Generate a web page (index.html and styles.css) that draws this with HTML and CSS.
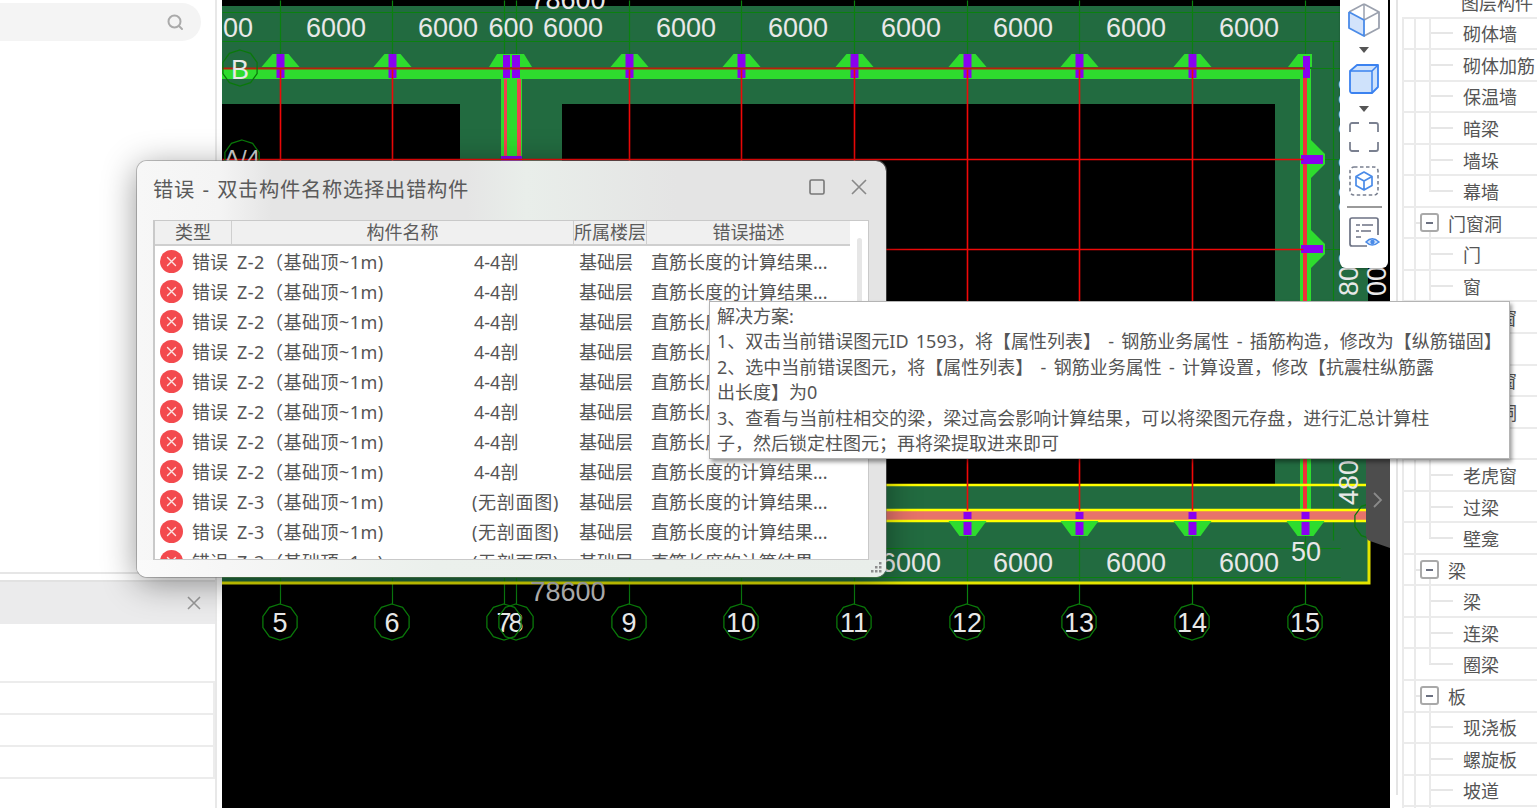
FILE: index.html
```html
<!DOCTYPE html>
<html lang="zh-CN">
<head>
<meta charset="utf-8">
<title>错误 - 双击构件名称选择出错构件</title>
<link rel="stylesheet" href="styles.css">
</head>
<body>
<aside class="left">
  <div class="search">
    <svg class="search-icon" width="18" height="18" viewBox="0 0 18 18"><circle cx="8.5" cy="8.5" r="6" fill="none" stroke="#aaa" stroke-width="2"/><path d="M13 13l3 3" stroke="#aaa" stroke-width="2" stroke-linecap="round"/></svg>
  </div>
  <div class="left-rule"></div>
  <section class="lower">
    <header class="lower-head">
      <svg width="14" height="14" viewBox="0 0 14 14"><path d="M1 1l12 12M13 1L1 13" stroke="#999" stroke-width="1.6"/></svg>
    </header>
    <div class="lower-blank"></div>
    <div class="lower-row"></div>
    <div class="lower-row"></div>
    <div class="lower-row"></div>
  </section>
</aside>

<main class="cad">
  <svg class="drawing" width="1168" height="808" viewBox="222 0 1168 808">
    <defs>
      <g id="mt"><polygon points="-19,67 -8,54 8,54 19,67" fill="#2edc2e"/><rect x="-4" y="54" width="8" height="24" fill="#8a00f0"/></g>
      <g id="mb"><polygon points="-19,521 -8,536 8,536 19,521" fill="#2edc2e"/><rect x="-4" y="512" width="8" height="7" fill="#8a00f0"/><rect x="-4" y="522" width="8" height="13" fill="#8a00f0"/></g>
      <polygon id="oct" points="0,-18 10.6,-14.6 17.1,-5.6 17.1,5.6 10.6,14.6 0,18 -10.6,14.6 -17.1,5.6 -17.1,-5.6 -10.6,-14.6" fill="none" stroke="#0a780a" stroke-width="1.3"/>
      <symbol id="err" viewBox="0 0 23 23"><circle cx="11.5" cy="11.5" r="11.5" fill="#f34a4e"/><path d="M7.5 7.5l8 8M15.5 7.5l-8 8" stroke="#fff" stroke-width="1.4" stroke-linecap="round" opacity=".85"/></symbol>
    </defs>

    <rect x="222" y="0" width="1168" height="808" fill="#000"/>
    <rect x="222" y="6" width="1146" height="578" fill="#226b40"/>
    <rect x="222" y="104" width="238" height="381" fill="#000"/>
    <rect x="562" y="104" width="713" height="381" fill="#000"/>

    <g stroke="#0a800f" stroke-width="1.2" fill="none" transform="translate(.5 .5)">
      <path d="M222 12H1340M222 41H1340M222 68H1340M1311 159H1340M1311 249H1340M222 548H1340M222 577H1340M1333 41V540"/>
      <path d="M280 0V69M392 0V69M504 0V69M516 0V69M629 0V69M741 0V69M854 0V69M967 0V69M1079 0V69M1192 0V69M1305 0V69"/>
      <path d="M280 535V604M392 535V604M504 535V604M516 535V604M629 535V604M741 535V604M854 535V604M967 535V604M1079 535V604M1192 535V604M1305 535V604"/>
    </g>

    <rect x="222" y="69" width="1089" height="10" fill="#2edc2e"/>
    <rect x="1300" y="69" width="11" height="452" fill="#2edc2e"/>
    <rect x="501" y="79" width="21" height="90" fill="#2edc2e"/>
    <rect x="504" y="79" width="3" height="90" fill="#f5404f"/>
    <rect x="517" y="79" width="4" height="90" fill="#f5404f"/>
    <rect x="1303" y="69" width="4" height="452" fill="#f0303a"/>

    <rect x="222" y="510" width="1146" height="11" fill="#e8736a"/>
    <path d="M222 485H1366M222 510H1366M222 521H1366" stroke="#ffff00" stroke-width="2.4" fill="none"/>
    <path d="M222 583H1369V530" stroke="#e4e400" stroke-width="3" fill="none"/>

    <g transform="translate(.5 0)">
      <use href="#mt" x="280"/><use href="#mt" x="392"/><use href="#mt" x="629"/><use href="#mt" x="741"/><use href="#mt" x="854"/><use href="#mt" x="967"/><use href="#mt" x="1079"/><use href="#mt" x="1192"/>
      <use href="#mb" x="967"/><use href="#mb" x="1079"/><use href="#mb" x="1192"/><use href="#mb" x="1305"/><use href="#mb" x="854"/><use href="#mb" x="741"/>
    </g>
    <polygon points="489,67 497,54 524,54 532,67" fill="#2edc2e"/>
    <rect x="503" y="55" width="7" height="23" fill="#8a00f0"/><rect x="512" y="55" width="8" height="23" fill="#8a00f0"/>
    <rect x="501" y="156" width="21" height="5" fill="#8a00f0"/>
    <polygon points="1288,67 1298,54 1312,54 1312,67" fill="#2edc2e"/>
    <rect x="1303" y="56" width="7" height="22" fill="#8a00f0"/>
    <polygon points="1311,140 1325,154 1325,164 1311,178" fill="#2edc2e"/>
    <polygon points="1311,230 1325,244 1325,254 1311,268" fill="#2edc2e"/>
    <rect x="1301" y="155" width="22" height="9" fill="#8a00f0"/>
    <rect x="1301" y="245" width="22" height="8" fill="#8a00f0"/>

    <g stroke="#f00808" stroke-width="1.6" fill="none" transform="translate(.5 .5)">
      <path d="M222 159H1303M222 249H1303"/>
      <path d="M280 69V510M392 69V510M629 69V510M741 69V510M854 69V510M967 69V510M1079 69V510M1192 69V510"/>
    </g>
    <path d="M222 68.6H1305" stroke="#b8200c" stroke-width="2"/>

    <g class="dim">
      <text x="238" y="37">00</text><text x="336" y="37">6000</text><text x="448" y="37">6000</text><text x="511" y="37">600</text><text x="573" y="37">6000</text><text x="686" y="37">6000</text><text x="798" y="37">6000</text><text x="911" y="37">6000</text><text x="1023" y="37">6000</text><text x="1136" y="37">6000</text><text x="1249" y="37">6000</text>
      <text x="568" y="9">78600</text>
      <text x="911" y="572">6000</text><text x="1023" y="572">6000</text><text x="1136" y="572">6000</text><text x="1249" y="572">6000</text>
      <text x="1306" y="561">50</text>
      <text class="dim-soft" x="568" y="601">78600</text>
      <text x="240" y="79">B</text>
      <text class="dim-small" x="242" y="167">A/4</text>
      <text x="280" y="632">5</text><text x="392" y="632">6</text><text x="504" y="632">7</text><text x="516" y="632">8</text><text x="629" y="632">9</text><text x="741" y="632">10</text><text x="854" y="632">11</text><text x="967" y="632">12</text><text x="1079" y="632">13</text><text x="1192" y="632">14</text><text x="1305" y="632">15</text>
      <text class="dim-v" transform="translate(1358 137) rotate(-90)">6000</text>
      <text class="dim-v" transform="translate(1358 215) rotate(-90)">6000</text>
      <text class="dim-v" transform="translate(1358 296) rotate(-90)">800</text>
      <text class="dim-v" transform="translate(1386 296) rotate(-90)">000</text>
      <text class="dim-v" transform="translate(1358 505) rotate(-90)">480</text>
    </g>

    <use href="#oct" x="240" y="68"/><use href="#oct" x="242" y="158"/><use href="#oct" x="1372" y="521"/>
    <use href="#oct" x="280" y="622"/><use href="#oct" x="392" y="622"/><use href="#oct" x="504" y="622"/><use href="#oct" x="516" y="622"/><use href="#oct" x="629" y="622"/><use href="#oct" x="741" y="622"/><use href="#oct" x="854" y="622"/><use href="#oct" x="967" y="622"/><use href="#oct" x="1079" y="622"/><use href="#oct" x="1192" y="622"/><use href="#oct" x="1305" y="622"/>

    <path d="M1390 440H1376Q1366 440 1366 450V535Q1366 540 1370 541L1390 548Z" fill="#4d4d4d"/>
    <path d="M1374 493l7 7-7 7" fill="none" stroke="#8a8a8a" stroke-width="1.8"/>
  </svg>

  <nav class="tools">
    <svg class="t-cube1" width="32" height="34" viewBox="0 0 32 34"><polygon points="1,9 16,17 16,33 1,25" fill="#d3e3fb"/><path d="M16 1l15 8v16l-15 8" fill="none" stroke="#9ba1ae" stroke-width="1.8" stroke-linejoin="round"/><path d="M16 1L1 9M16 17l15-8M16 1v16" fill="none" stroke="#9ba1ae" stroke-width="1.5"/><path d="M1 9v16l15 8V17L1 9" fill="none" stroke="#4a8be8" stroke-width="1.8" stroke-linejoin="round"/></svg>
    <svg class="t-arrow" width="10" height="8" viewBox="0 0 10 8"><polygon points="0,1 10,1 5,7" fill="#555"/></svg>
    <svg class="t-cube2" width="32" height="32" viewBox="0 0 32 32"><path d="M2 8l7-6h21v22l-6 6H4a2 2 0 0 1-2-2z" fill="#cfe2fb" stroke="#3b82f0" stroke-width="1.8" stroke-linejoin="round"/><path d="M2 8h22v22M24 8l6-6" fill="none" stroke="#3b82f0" stroke-width="1.5"/></svg>
    <svg class="t-arrow2" width="10" height="8" viewBox="0 0 10 8"><polygon points="0,1 10,1 5,7" fill="#555"/></svg>
    <svg class="t-frame" width="32" height="32" viewBox="0 0 32 32"><path d="M11 2H4a2 2 0 0 0-2 2v7M21 2h7a2 2 0 0 1 2 2v7M11 30H4a2 2 0 0 1-2-2v-7M21 30h7a2 2 0 0 0 2-2v-7" fill="none" stroke="#7a8090" stroke-width="1.8"/></svg>
    <svg class="t-sel" width="32" height="32" viewBox="0 0 32 32"><rect x="2" y="2" width="28" height="28" rx="4" fill="none" stroke="#7a8090" stroke-width="1.6" stroke-dasharray="3.5 2.5"/><path d="M16 7l8 4.500v9L16 25l-8-4.500v-9zM8 11.500l8 4.500 8-4.500M16 16v9" fill="none" stroke="#4a8be8" stroke-width="1.7" stroke-linejoin="round"/></svg>
    <div class="t-rule"></div>
    <svg class="t-doc" width="32" height="32" viewBox="0 0 32 32"><path d="M19 30H4a2 2 0 0 1-2-2V4a2 2 0 0 1 2-2h24a2 2 0 0 1 2 2v15" fill="none" stroke="#6c7284" stroke-width="1.7"/><path d="M8 9h4M14 9h11M8 15h3M13 15h10M8 21h5" stroke="#6c7284" stroke-width="1.6"/><path d="M18 26q6-6.500 13 0-7 6-13 0z" fill="#cfe2fb" stroke="#4a8be8" stroke-width="1.5"/><circle cx="24.500" cy="26" r="2.200" fill="#4a8be8"/></svg>
  </nav>
</main>

<aside class="right">
  <div class="tree">
    <div class="row">图层构件</div>
    <div class="row leaf">砌体墙</div>
    <div class="row leaf">砌体加筋</div>
    <div class="row leaf">保温墙</div>
    <div class="row leaf">暗梁</div>
    <div class="row leaf">墙垛</div>
    <div class="row leaf last">幕墙</div>
    <div class="row group"><span class="minus"></span>门窗洞</div>
    <div class="row leaf">门</div>
    <div class="row leaf">窗</div>
    <div class="row leaf">门联窗</div>
    <div class="row leaf">墙洞</div>
    <div class="row leaf">带形窗</div>
    <div class="row leaf">带形洞</div>
    <div class="row leaf">飘窗</div>
    <div class="row leaf">老虎窗</div>
    <div class="row leaf">过梁</div>
    <div class="row leaf last">壁龛</div>
    <div class="row group"><span class="minus"></span>梁</div>
    <div class="row leaf">梁</div>
    <div class="row leaf">连梁</div>
    <div class="row leaf last">圈梁</div>
    <div class="row group"><span class="minus"></span>板</div>
    <div class="row leaf">现浇板</div>
    <div class="row leaf">螺旋板</div>
    <div class="row leaf">坡道</div>
    <div class="row leaf"></div>
  </div>
</aside>

<section class="dialog">
  <header class="dlg-title">
    <h1>错误 - 双击构件名称选择出错构件</h1>
    <svg class="dlg-max" width="16" height="16" viewBox="0 0 16 16"><rect x="1" y="1" width="14" height="14" rx="1.500" fill="none" stroke="#777" stroke-width="1.600"/></svg>
    <svg class="dlg-close" width="16" height="16" viewBox="0 0 16 16"><path d="M1 1l14 14M15 1L1 15" stroke="#888" stroke-width="1.600"/></svg>
  </header>
  <div class="table">
    <div class="tmain">
      <div class="thead">
        <div class="th th-type">类型</div>
        <div class="th th-name">构件名称</div>
        <div class="th th-floor">所属楼层</div>
        <div class="th th-desc">错误描述</div>
      </div>
      <div class="tbody">
        <div class="tr"><svg width="23" height="23"><use href="#err"/></svg><span>错误</span><span>Z-2（基础顶~1m)</span><span>4-4剖</span><span>基础层</span><span>直筋长度的计算结果...</span></div>
        <div class="tr"><svg width="23" height="23"><use href="#err"/></svg><span>错误</span><span>Z-2（基础顶~1m)</span><span>4-4剖</span><span>基础层</span><span>直筋长度的计算结果...</span></div>
        <div class="tr"><svg width="23" height="23"><use href="#err"/></svg><span>错误</span><span>Z-2（基础顶~1m)</span><span>4-4剖</span><span>基础层</span><span>直筋长度的计算结果...</span></div>
        <div class="tr"><svg width="23" height="23"><use href="#err"/></svg><span>错误</span><span>Z-2（基础顶~1m)</span><span>4-4剖</span><span>基础层</span><span>直筋长度的计算结果...</span></div>
        <div class="tr"><svg width="23" height="23"><use href="#err"/></svg><span>错误</span><span>Z-2（基础顶~1m)</span><span>4-4剖</span><span>基础层</span><span>直筋长度的计算结果...</span></div>
        <div class="tr"><svg width="23" height="23"><use href="#err"/></svg><span>错误</span><span>Z-2（基础顶~1m)</span><span>4-4剖</span><span>基础层</span><span>直筋长度的计算结果...</span></div>
        <div class="tr"><svg width="23" height="23"><use href="#err"/></svg><span>错误</span><span>Z-2（基础顶~1m)</span><span>4-4剖</span><span>基础层</span><span>直筋长度的计算结果...</span></div>
        <div class="tr"><svg width="23" height="23"><use href="#err"/></svg><span>错误</span><span>Z-2（基础顶~1m)</span><span>4-4剖</span><span>基础层</span><span>直筋长度的计算结果...</span></div>
        <div class="tr"><svg width="23" height="23"><use href="#err"/></svg><span>错误</span><span>Z-3（基础顶~1m)</span><span class="paren">(无剖面图)</span><span>基础层</span><span>直筋长度的计算结果...</span></div>
        <div class="tr"><svg width="23" height="23"><use href="#err"/></svg><span>错误</span><span>Z-3（基础顶~1m)</span><span class="paren">(无剖面图)</span><span>基础层</span><span>直筋长度的计算结果...</span></div>
        <div class="tr"><svg width="23" height="23"><use href="#err"/></svg><span>错误</span><span>Z-3（基础顶~1m)</span><span class="paren">(无剖面图)</span><span>基础层</span><span>直筋长度的计算结果...</span></div>
      </div>
    </div>
    <div class="scroll"><div class="thumb"></div></div>
  </div>
  <footer class="dlg-foot">
    <svg width="12" height="12" viewBox="0 0 12 12"><g fill="#8d8d8d"><rect x="9" y="0" width="2.500" height="2.500"/><rect x="5" y="4" width="2.500" height="2.500"/><rect x="9" y="4" width="2.500" height="2.500"/><rect x="1" y="8" width="2.500" height="2.500"/><rect x="5" y="8" width="2.500" height="2.500"/><rect x="9" y="8" width="2.500" height="2.500"/></g></svg>
  </footer>
</section>

<div class="tooltip">解决方案:<br>1、双击当前错误图元ID 1593，将【属性列表】 - 钢筋业务属性 - 插筋构造，修改为【纵筋锚固】<br>2、选中当前错误图元，将【属性列表】 - 钢筋业务属性 - 计算设置，修改【抗震柱纵筋露<br>出长度】为0<br>3、查看与当前柱相交的梁，梁过高会影响计算结果，可以将梁图元存盘，进行汇总计算柱<br>子，然后锁定柱图元；再将梁提取进来即可</div>
</body>
</html>
```
FILE: styles.css
```css
* { box-sizing: border-box; }
html, body { margin: 0; height: 808px; overflow: hidden; }
body {
  display: flex;
  width: 1537px;
  background: #fff;
  color: #555;
  font-family: "Noto Sans", "Noto Sans CJK SC", sans-serif;
  font-size: 18px;
}

/* left panel */
.left {
  flex: none;
  width: 217px;
  margin-right: 5px;
  border-right: 2px solid #e8e8e8;
  display: flex;
  flex-direction: column;
}
.search {
  width: 201px;
  height: 38px;
  margin-top: 3px;
  padding-right: 17px;
  background: #f4f4f4;
  border-radius: 0 19px 19px 0;
  display: flex;
  align-items: center;
  justify-content: flex-end;
}
.left-rule { margin-top: auto; height: 2px; background: #e6e6e6; }
.lower { margin-top: 6px; height: 228px; border-top: 2px solid #e2e2e2; }
.lower-head {
  height: 42px;
  background: #ebebec;
  display: flex;
  align-items: center;
  justify-content: flex-end;
  padding-right: 14px;
}
.lower-blank { height: 59px; border-bottom: 2px solid #ececec; }
.lower-row { height: 32px; border-bottom: 2px solid #ececec; border-right: 2px solid #ececec; }

/* CAD canvas */
.cad { flex: none; width: 1168px; height: 808px; position: relative; }
.drawing { display: block; }
.dim text {
  font-family: "Liberation Sans", sans-serif;
  font-size: 27px;
  fill: #e8e8e8;
  text-anchor: middle;
}
.dim .dim-soft { fill: #bdbdbd; }
.dim .dim-small { font-size: 24px; fill: #cfcfcf; }
.dim .dim-v { text-anchor: start; }

.tools {
  position: absolute;
  left: 1118px;
  top: 0;
  width: 48px;
  height: 268px;
  padding-top: 3px;
  background: #fff;
  border-radius: 0 0 6px 6px;
  box-shadow: 0 1px 2px rgba(0, 0, 0, .25);
  display: flex;
  flex-direction: column;
  align-items: center;
}
.tools svg { display: block; flex: none; }
.t-arrow { margin-top: 9px; }
.t-cube2 { margin-top: 9px; }
.t-arrow2 { margin-top: 10px; }
.t-frame { margin-top: 8px; }
.t-sel { margin-top: 12px; }
.t-rule { width: 35px; height: 2px; margin-top: 9px; background: #9a9a9a; }
.t-doc { margin-top: 8px; }

/* right tree */
.right { flex: none; width: 147px; height: 808px; overflow: hidden; padding-left: 6px; }
.tree { height: 808px; padding-left: 4px; border-left: 2px solid #e4e4e4; }
.row {
  height: 31.55px;
  padding: 2px 0 0 59px;
  display: flex;
  align-items: center;
  white-space: nowrap;
  border-bottom: 2px solid #ebebeb;
  line-height: 24px;
}
.row:first-child { margin-top: -13px; }
.leaf {
  padding-left: 61px;
  background-image: linear-gradient(#eaeaea, #eaeaea), linear-gradient(#eaeaea, #eaeaea), linear-gradient(#eaeaea, #eaeaea), linear-gradient(#e6e6e6, #e6e6e6);
  background-repeat: no-repeat;
  background-size: 2px 100%, 2px 100%, 2px 100%, 24px 2px;
  background-position: 0 0, 12px 0, 27px 0, 27px 50%;
}
.leaf.last { background-size: 2px 100%, 2px 100%, 2px 50%, 24px 2px; }
.group {
  padding-left: 18px;
  background-image: linear-gradient(#eaeaea, #eaeaea), linear-gradient(#eaeaea, #eaeaea), linear-gradient(#e6e6e6, #e6e6e6), linear-gradient(#eaeaea, #eaeaea);
  background-repeat: no-repeat;
  background-size: 2px 100%, 2px 100%, 8px 2px, 2px 50%;
  background-position: 0 0, 12px 0, 12px 50%, 27px 100%;
}
.minus {
  flex: none;
  width: 19px;
  height: 19px;
  margin: -2px 9px 0 0;
  background: linear-gradient(#6b7080, #6b7080) center / 7px 2px no-repeat #fff;
  border: 2px solid #a9a9a9;
  border-radius: 3px;
}

/* error dialog */
.dialog {
  position: absolute;
  left: 137px;
  top: 161px;
  width: 749px;
  height: 416px;
  border-radius: 10px;
  overflow: hidden;
  background: linear-gradient(90deg, #f7f7f7 0, #f4f4f4 11%, #e5e5e5 18%, #e5e5e5 44%, #e9eeea 52%, #e4e4e4 72%, #e4e4e4 100%);
  box-shadow: 0 6px 34px rgba(0, 0, 0, .42), 0 0 0 1px rgba(150, 150, 150, .5);
}
.dlg-title { height: 59px; padding: 0 19px 8px 16px; display: flex; align-items: center; }
.dlg-title h1 {
  margin: 2px auto 0 0;
  font-size: 20.3px;
  font-weight: 400;
  color: #5a5a5a;
  letter-spacing: .7px;
  word-spacing: 1.5px;
  white-space: nowrap;
}
.dlg-close { margin-left: 26px; }
.table {
  margin: 0 17px 0 16px;
  height: 340px;
  display: flex;
  background: #fff;
  border: 1px solid #c9c9c9;
  border-left-width: 2px;
  overflow: hidden;
}
.tmain { flex: none; width: 695px; }
.thead {
  height: 25px;
  display: flex;
  background: #f0f0f0;
  border-bottom: 2px solid #cfcfcf;
  line-height: 22px;
  text-align: center;
  color: #5c5c5c;
}
.th { flex: none; border-right: 1.5px solid #cfcfcf; white-space: nowrap; }
.th-type { width: 77px; }
.th-name { width: 342px; }
.th-floor { width: 73px; }
.th-desc { width: 203px; border-right: 0; }
.tbody { padding-top: 1px; }
.tr {
  height: 30px;
  padding-left: 5px;
  display: grid;
  grid-template-columns: 32px 45px 237px 105px 72px 1fr;
  align-items: center;
  white-space: nowrap;
  line-height: 30px;
}
.tr svg { margin-top: -2px; }
.tr span:nth-of-type(2) { letter-spacing: .5px; }
.paren { margin-left: -2px; letter-spacing: .7px; }
.scroll { flex: 1; padding: 17px 0 0 7px; }
.thumb { width: 5px; height: 90px; border-radius: 3px; background: #e6e6e6; }
.dlg-foot {
  height: 17px;
  padding: 2px 4px 0 0;
  display: flex;
  justify-content: flex-end;
  background: linear-gradient(90deg, #fafafa 0, #f6f6f6 12%, #ebf0ec 40%, #e9eeea 100%);
}

/* tooltip */
.tooltip {
  position: absolute;
  left: 709px;
  top: 301px;
  width: 801px;
  height: 158px;
  padding: 2px 0 0 7px;
  background: #fff;
  border: 1px solid #b4b4b4;
  box-shadow: 2px 3px 4px rgba(0, 0, 0, .4);
  line-height: 25.4px;
  color: #555;
  white-space: nowrap;
  word-spacing: 2.6px;
}
```
